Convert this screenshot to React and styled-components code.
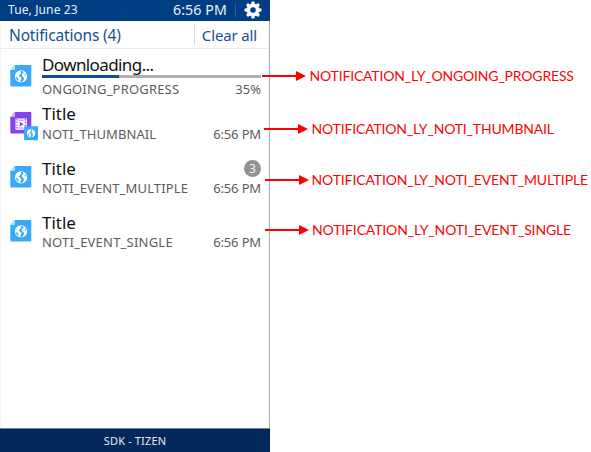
import React from "react";
import styled, { createGlobalStyle } from "styled-components";

const Global = createGlobalStyle`
  * { box-sizing: border-box; }
  body { margin: 0; background: #fff; font-family: "Noto Sans", sans-serif; }
`;
const Page = styled.div`
  display: flex;
  width: 591px;
  height: 452px;
  overflow: hidden;
  background: #fff;
`;
const Phone = styled.main`
  display: flex;
  flex: none;
  flex-direction: column;
  width: 270px;
  height: 452px;
`;
const Text = styled.span`
  display: block;
  white-space: nowrap;
  font-size: ${(p) => p.$size}px;
  line-height: ${(p) => p.$line}px;
  letter-spacing: ${(p) => p.$track || 0}px;
  color: ${(p) => p.$color || "inherit"};
`;
const StatusBar = styled.header`
  display: flex;
  align-items: center;
  height: 21px;
  padding: 0 8px 1px 8px;
  background: #003d82;
  color: #e9f1fb;
`;
const Push = styled.div`
  margin-left: auto;
`;
const StatusDivider = styled.div`
  width: 1px;
  height: 14px;
  margin: 0 8px 0 8px;
  background: #2a5c96;
`;
const Screen = styled.section`
  display: flex;
  flex: 1;
  flex-direction: column;
  border-right: 1px solid #adadad;
  border-left: 1px solid #f4f4f4;
`;
const TitleBar = styled.div`
  display: flex;
  align-items: center;
  height: 28px;
  padding: 1px 12px 0 8px;
  border-bottom: 1px solid #ececec;
  color: #17508f;
`;
const TitleDivider = styled.div`
  width: 1px;
  height: 20px;
  margin: 0 7px 0 auto;
  background: #dcdcdc;
`;
const Row = styled.article`
  display: grid;
  grid-template-columns: 32px 219px;
  height: ${(p) => p.$height}px;
  padding: ${(p) => p.$top}px 0 0 9px;
`;
const IconSlot = styled.div`
  padding-top: ${(p) => p.$top}px;
  height: 0;
`;
const Line = styled.div`
  display: flex;
  justify-content: space-between;
  align-items: center;
  height: ${(p) => p.$height}px;
  color: ${(p) => p.$color};
`;
const TitleText = styled(Text)`
  margin-top: -2px;
`;
const Track = styled.div`
  height: 3px;
  margin: 0 0 2px;
  background: #b0b0b0;
`;
const Fill = styled.div`
  width: 35%;
  height: 3px;
  background: #124c91;
`;
const Badge = styled.span`
  display: flex;
  align-items: center;
  justify-content: center;
  width: 17px;
  height: 17px;
  margin-top: -4px;
  border-radius: 50%;
  background: #929292;
  color: #f4f4f4;
  font-size: 12px;
  line-height: 17px;
`;
const Footer = styled.footer`
  display: flex;
  align-items: center;
  justify-content: center;
  height: 24px;
  border-top: 1px solid #647f9f;
  background: #04285b;
  color: #e4e9f1;
`;
/* Callouts start over the phone's right edge. */
const Callouts = styled.aside`
  position: relative;
  margin-left: -9px;
  padding-top: 66px;
  color: #fa0505;
  font-family: Lato, sans-serif;
`;
const Callout = styled.div`
  display: flex;
  align-items: center;
  height: 20px;
  margin: 0 0 ${(p) => p.$gap}px ${(p) => p.$indent}px;
`;
const ArrowBox = styled.svg`
  flex: none;
  display: block;
  margin-right: ${(p) => p.$gap}px;
`;
const Svg = styled.svg`
  display: block;
  overflow: visible;
`;

const Globe = () => (
  <g>
    <circle cx="11" cy="11.4" r="6.1" fill="#fff" />
    <path d="M10.6 5.9 12.4 6 13.6 7.4 12.4 8.4 11.8 9.8 12.3 11.4 13.6 12.2 14 13.7 13.2 15.8 11.6 16.9 10 16.7 10.9 14.8 11.6 13.3 10.6 12 9 11.1 9.2 9.9 10.5 9.1 11.2 7.5ZM6 11.8 7.5 12.6 8.4 14.2 8.4 15.9 6.6 14.4ZM15.4 8.6 16.2 10.3 15.2 10.6 14.5 9.6Z" fill="#39a9f8" />
  </g>
);
const FileIcon = () => (
  <Svg width="22" height="22" viewBox="0 0 22 22">
    <path d="M5 0H20.5Q21.3 0 21.3.8V20.5Q21.3 21.5 20.3 21.5H1.3Q.3 21.5.3 20.5V5Z" fill="#39a9f8" />
    <path d="M.3 5 5 0V4.2Q5 5 4.2 5Z" fill="#b5defb" />
    <Globe />
  </Svg>
);
const VideoIcon = () => (
  <Svg width="29" height="29" viewBox="0 0 29 29">
    <path d="M5 0H20.5Q21.3 0 21.3.8V20.5Q21.3 21.5 20.3 21.5H1.3Q.3 21.5.3 20.5V5Z" fill="#8743eb" />
    <path d="M.3 5 5 0V4.2Q5 5 4.2 5Z" fill="#cbb0f7" />
    <rect x="5.5" y="6.5" width="11.3" height="11.3" fill="#fff" />
    <path d="M7 7v10.5M15.3 7v10.5" stroke="#8743eb" strokeWidth="1.2" strokeDasharray="1.4 1.3" />
    <path d="M8.7 8.2h5M8.7 16h5" stroke="#8743eb" strokeWidth=".7" />
    <path d="m9.7 9.8 4 2.4-4 2.4Z" fill="#8743eb" />
    <rect x="14" y="14.2" width="14" height="14" rx="1" fill="#39a9f8" />
    <g transform="translate(13.6 13.6) scale(.67)"><Globe /></g>
  </Svg>
);
const Gear = () => (
  <Svg width="18" height="18" viewBox="-9 -9 18 18">
    <g fill="#fff">
      {[0, 45, 90, 135].map((a) => (
        <path key={a} transform={`rotate(${a})`} d="M-1.3-8.5H1.3L2.2-5V5L1.3 8.5H-1.3L-2.2 5V-5Z" />
      ))}
      <circle r="6.2" />
    </g>
    <circle r="2.8" fill="#003d82" />
  </Svg>
);
const Arrow = ({ length, gap }) => (
  <ArrowBox $gap={gap} width={length} height="10" viewBox={`0 0 ${length} 10`}>
    <path d={`M0 5H${length - 8}`} stroke="#fd0000" strokeWidth="2" />
    <path d={`M${length - 10} 0 ${length} 5 ${length - 10} 10Z`} fill="#fd0000" />
  </ArrowBox>
);

const rows = [
  { title: "Downloading...", sub: "ONGOING_PROGRESS", end: "35%", height: 54, top: 7, icon: 9, progress: true, track: 0.18, titleTrack: -0.6, subLine: 18 },
  { title: "Title", sub: "NOTI_THUMBNAIL", end: "6:56 PM", height: 55, top: 2, icon: 7, video: true, track: 0.08, subLine: 18 },
  { title: "Title", sub: "NOTI_EVENT_MULTIPLE", end: "6:56 PM", height: 54, top: 2, icon: 6, count: 3, track: 0.13, subLine: 16 },
  { title: "Title", sub: "NOTI_EVENT_SINGLE", end: "6:56 PM", height: 54, top: 2, icon: 6, track: 0.22, subLine: 16 },
];
const callouts = [
  { text: "NOTIFICATION_LY_ONGOING_PROGRESS", indent: 1, gap: 33, length: 44, space: 3.5, track: -0.18 },
  { text: "NOTIFICATION_LY_NOTI_THUMBNAIL", indent: 3, gap: 31, length: 44, space: 3.5, track: -0.17 },
  { text: "NOTIFICATION_LY_NOTI_EVENT_MULTIPLE", indent: 4, gap: 30, length: 44, space: 2.5, track: -0.13 },
  { text: "NOTIFICATION_LY_NOTI_EVENT_SINGLE", indent: 4, gap: 0, length: 44, space: 3, track: -0.14 },
];

export default function App() {
  return (
    <>
      <Global />
      <Page>
        <Phone>
          <StatusBar>
            <Text $size={12} $line={20} $track={0.12}>Tue, June 23</Text>
            <Push><Text $size={14.2} $line={20} $track={0.1}>6:56 PM</Text></Push>
            <StatusDivider />
            <Gear />
          </StatusBar>
          <Screen>
            <TitleBar>
              <Text $size={15.5} $line={27} $track={-0.15}>Notifications (4)</Text>
              <TitleDivider />
              <Text $size={15} $line={27} $track={-0.15}>Clear all</Text>
            </TitleBar>
            {rows.map((r) => (
              <Row key={r.sub} $height={r.height} $top={r.top}>
                <IconSlot $top={r.icon}>{r.video ? <VideoIcon /> : <FileIcon />}</IconSlot>
                <div>
                  <Line $height={r.progress ? 19 : 20} $color="#111">
                    <TitleText $size={17} $line={20} $track={r.titleTrack}>{r.title}</TitleText>
                    {r.count && <Badge>{r.count}</Badge>}
                  </Line>
                  {r.progress && <Track><Fill /></Track>}
                  <Line $height={r.subLine} $color="#5c5c5c">
                    <Text $size={13} $line={18} $track={r.track}>{r.sub}</Text>
                    <Text $size={13} $line={18} $track={r.progress ? 0 : -0.15}>{r.end}</Text>
                  </Line>
                </div>
              </Row>
            ))}
          </Screen>
          <Footer><Text $size={11} $line={22} $track={0.15}>SDK - TIZEN</Text></Footer>
        </Phone>
        <Callouts>
          {callouts.map((c) => (
            <Callout key={c.text} $indent={c.indent} $gap={c.gap}>
              <Arrow length={c.length} gap={c.space} />
              <Text $size={14} $line={20} $track={c.track}>{c.text}</Text>
            </Callout>
          ))}
        </Callouts>
      </Page>
    </>
  );
}
